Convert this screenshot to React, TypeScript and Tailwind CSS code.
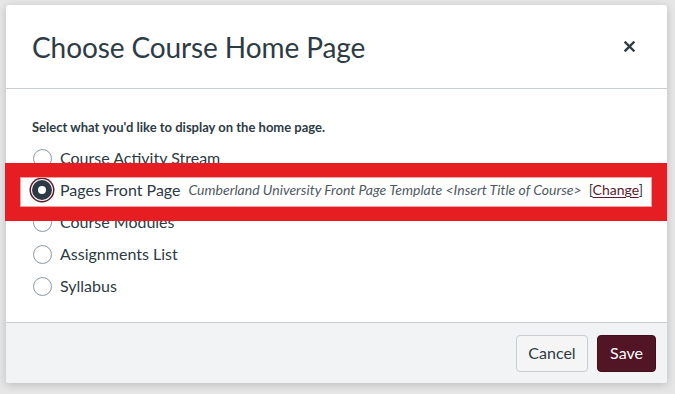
import { useState } from 'react';

const options = [
  { id: 'feed', label: 'Course Activity Stream' },
  { id: 'wiki', label: 'Pages Front Page' },
  { id: 'modules', label: 'Course Modules' },
  { id: 'assignments', label: 'Assignments List' },
  { id: 'syllabus', label: 'Syllabus' },
];

function Radio({ checked }: { checked: boolean }) {
  if (checked) {
    return (
      <span className="block h-[20px] w-[20px] rounded-full border-[6px] border-[#2d3b45] bg-white shadow-[0_0_0_1px_#ffffff,0_0_0_2.5px_#5b1a2b]" />
    );
  }
  return <span className="block h-[19px] w-[19px] rounded-full border border-[#8b969e] bg-white" />;
}

export default function App() {
  const [selected, setSelected] = useState('wiki');

  return (
    <div className="relative h-[394px] w-[675px] overflow-hidden bg-[#e6e6e6] font-['Lato',sans-serif] text-[#2d3b45]">
      <div className="ml-[6px] mt-[5px] flex h-[378px] w-[661px] flex-col rounded-[3px] bg-white shadow-[0_2px_8px_rgba(0,0,0,0.18)]">
        <div className="flex h-[84px] items-center justify-between border-b border-[#c7cdd1] pl-[26px] pr-[30px]">
          <h2 className="text-[28px] font-normal leading-none tracking-[-0.1px]">Choose Course Home Page</h2>
          <button className="flex h-[16px] w-[16px] items-center justify-center">
            <svg width="11" height="11" viewBox="0 0 11 11">
              <path d="M1.5 1.5 L9.5 9.5 M9.5 1.5 L1.5 9.5" stroke="#2d3b45" strokeWidth="2.4" strokeLinecap="square" />
            </svg>
          </button>
        </div>

        <div className="flex-1 pl-[26px] pt-[30px]">
          <p className="text-[13px] font-bold leading-4">Select what you'd like to display on the home page.</p>
          <ul className="mt-[7px]">
            {options.map((o) => (
              <li key={o.id} className="flex h-[32px] items-center" onClick={() => setSelected(o.id)}>
                <span className="flex w-[20px] items-center justify-center">
                  <Radio checked={selected === o.id} />
                </span>
                <span className="ml-[8px] text-[16px] leading-none">{o.label}</span>
                {o.id === 'wiki' && (
                  <span className="ml-[8px] text-[14px] leading-none">
                    <span className="italic text-[#4f5a63]">
                      Cumberland University Front Page Template &lt;Insert Title of Course&gt;
                    </span>
                    <span className="ml-[7px] text-[#2d3b45]">
                      [<a href="#" className="text-[#5b1a2b] underline underline-offset-2">Change</a>]
                    </span>
                  </span>
                )}
              </li>
            ))}
          </ul>
        </div>

        <div className="flex h-[61px] items-center justify-end gap-[9px] rounded-b-[3px] border-t border-[#c7cdd1] bg-[#f2f3f4] pr-[11px]">
          <button className="h-[37px] w-[72px] rounded-[4px] border border-[#c7cdd1] bg-[#f5f5f5] text-[16px] text-[#2d3b45]">
            Cancel
          </button>
          <button className="h-[37px] w-[59px] rounded-[4px] border border-[#3f0f1c] bg-[#521525] text-[16px] text-white">
            Save
          </button>
        </div>
      </div>

      {/* red annotation frame around the selected option */}
      <div className="absolute left-[5px] top-[163px] h-[58px] w-[662px] border-x-[15px] border-y-[14px] border-[#e61e22]">
        <div className="h-full w-full border border-[#f0a0a0]" />
      </div>
    </div>
  );
}
